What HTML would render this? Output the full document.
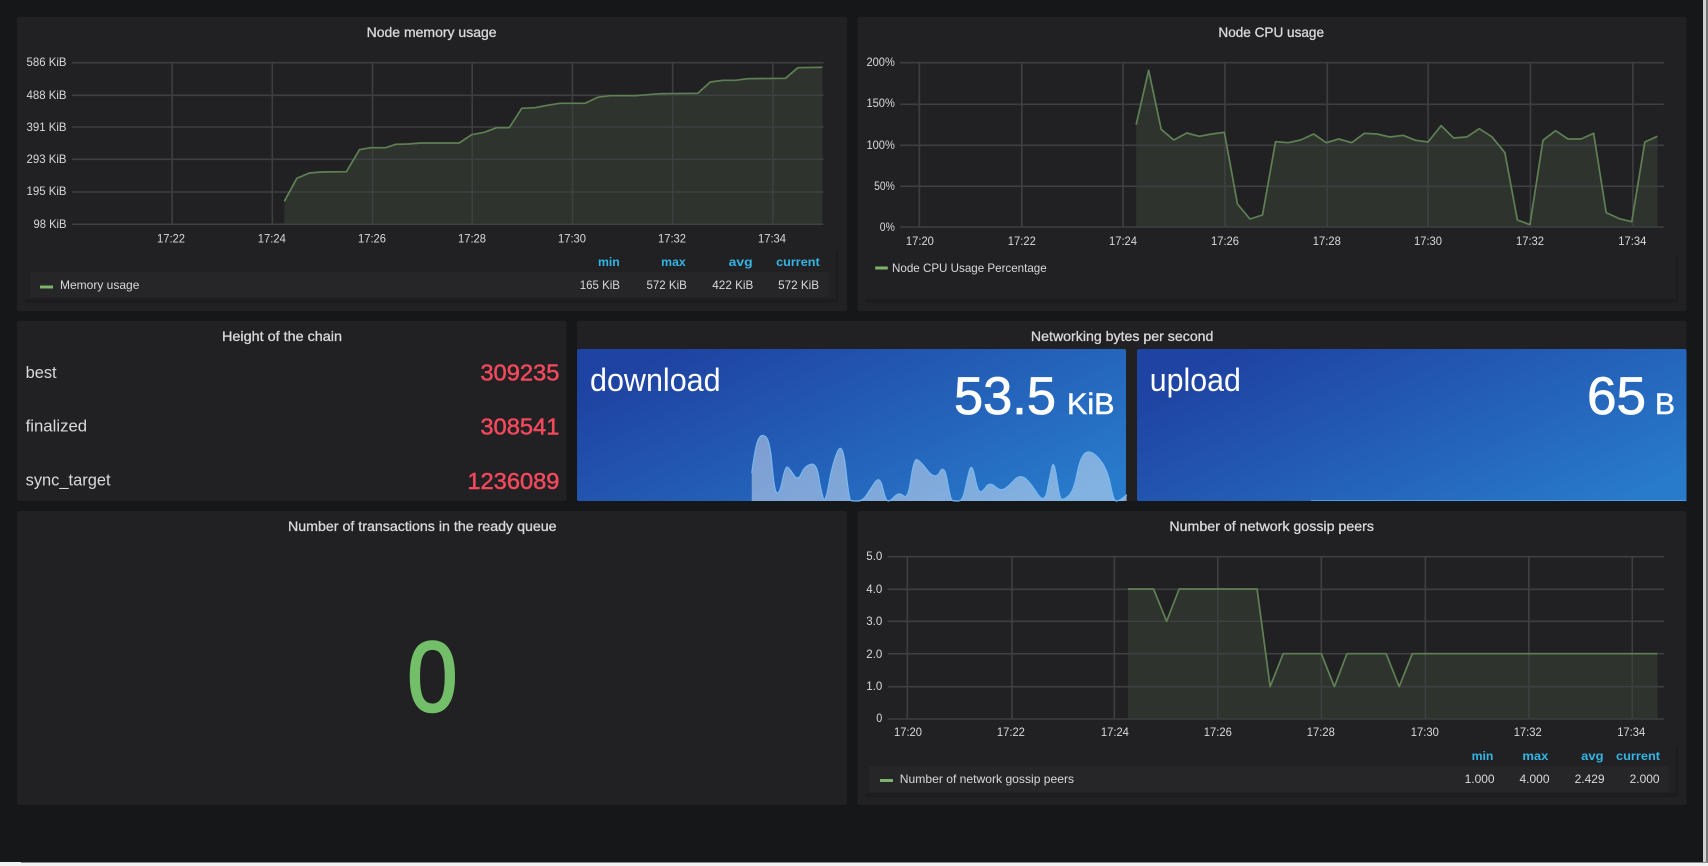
<!DOCTYPE html>
<html>
<head>
<meta charset="utf-8">
<style>
html,body{margin:0;padding:0;background:#161719;width:1708px;height:866px;overflow:hidden}
svg{display:block;font-family:"Liberation Sans",sans-serif}
text{white-space:pre}
.t{font-size:14px;fill:#d8d9da;text-anchor:middle;stroke:#d8d9da;stroke-width:.3px}
.k{font-size:12px;fill:#d8d9da;text-anchor:middle}
.y{font-size:12px;fill:#d8d9da;text-anchor:end}
.h{font-size:12px;fill:#33b5e5;text-anchor:end;font-weight:bold}
.v{font-size:12px;fill:#d8d9da;text-anchor:end}
.l{font-size:12px;fill:#d8d9da}
.n{font-size:17px;fill:#d8d9da}
.r{font-size:23px;fill:#f2495c;text-anchor:end;stroke:#f2495c;stroke-width:.5px}
.w{fill:#fff}
.g{stroke:#3d3f41;stroke-width:1.6;fill:none;vector-effect:non-scaling-stroke}
.s{stroke:#5f8055;stroke-width:1.7;fill:none;vector-effect:non-scaling-stroke;stroke-linejoin:round}
.a{fill:#2e332d;stroke:none}
</style>
</head>
<body>
<svg width="1708" height="866" viewBox="0 0 1708 866" xmlns="http://www.w3.org/2000/svg">
<defs>
<linearGradient id="bl" gradientUnits="objectBoundingBox" x1="0" y1="0.2" x2="1" y2="0.8">
<stop offset="0.05" stop-color="#1f43a2"/><stop offset="1" stop-color="#287acb"/>
</linearGradient>
</defs>
<rect width="1708" height="866" fill="#161719"/>

<!-- panels -->
<rect x="17" y="17" width="830" height="294" rx="2" fill="#212124"/>
<rect x="857.5" y="17" width="829" height="294" rx="2" fill="#212124"/>
<rect x="17" y="321" width="549.5" height="180" rx="2" fill="#212124"/>
<rect x="577" y="321" width="1109.5" height="180" rx="2" fill="#212124"/>
<rect x="17" y="511" width="830" height="294" rx="2" fill="#212124"/>
<rect x="857.5" y="511" width="829" height="294" rx="2" fill="#212124"/>

<!-- titles -->
<text class="t" x="431.6" y="37" textLength="130" lengthAdjust="spacingAndGlyphs">Node memory usage</text>
<text class="t" x="1271.2" y="37" textLength="105.6" lengthAdjust="spacingAndGlyphs">Node CPU usage</text>
<text class="t" x="282" y="341" textLength="120" lengthAdjust="spacingAndGlyphs">Height of the chain</text>
<text class="t" x="1122.2" y="341" textLength="182.5" lengthAdjust="spacingAndGlyphs">Networking bytes per second</text>
<text class="t" x="422.3" y="531" textLength="268.6" lengthAdjust="spacingAndGlyphs">Number of transactions in the ready queue</text>
<text class="t" x="1271.7" y="531" textLength="204.6" lengthAdjust="spacingAndGlyphs">Number of network gossip peers</text>

<!-- chart 1 -->
<g transform="scale(0.54466,0.33333)">
<polygon class="a" points="522,673 522,604 545,535 568,519 590,516 636,515 660,449 680,443 708,443 727,433 750,432 772,429 843,429 866,404 889,397 912,383 935,383 958,325 982,323 1005,316 1028,310 1074,310 1097,292 1120,287 1166,287 1212,281 1281,280 1304,246 1327,241 1350,241 1373,236 1442,235 1465,203 1510,202 1510,673"/>
<path class="g" d="M132 188H1512M132 286H1512M132 381H1512M132 478H1512M132 576H1512M132 673H1512M316 188V673M500 188V673M684 188V673M867 188V673M1051 188V673M1235 188V673M1419 188V673"/>
<polyline class="s" points="522,604 545,535 568,519 590,516 636,515 660,449 680,443 708,443 727,433 750,432 772,429 843,429 866,404 889,397 912,383 935,383 958,325 982,323 1005,316 1028,310 1074,310 1097,292 1120,287 1166,287 1212,281 1281,280 1304,246 1327,241 1350,241 1373,236 1442,235 1465,203 1510,202"/>
</g>
<g>
<text class="y" x="66.5" y="66" textLength="40" lengthAdjust="spacingAndGlyphs">586 KiB</text>
<text class="y" x="66.5" y="99" textLength="40" lengthAdjust="spacingAndGlyphs">488 KiB</text>
<text class="y" x="66.5" y="131" textLength="40" lengthAdjust="spacingAndGlyphs">391 KiB</text>
<text class="y" x="66.5" y="163" textLength="40" lengthAdjust="spacingAndGlyphs">293 KiB</text>
<text class="y" x="66.5" y="195" textLength="40" lengthAdjust="spacingAndGlyphs">195 KiB</text>
<text class="y" x="66.5" y="228" textLength="33" lengthAdjust="spacingAndGlyphs">98 KiB</text>
<text class="k" x="171" y="242.5" textLength="28" lengthAdjust="spacingAndGlyphs">17:22</text>
<text class="k" x="271.8" y="242.5" textLength="28" lengthAdjust="spacingAndGlyphs">17:24</text>
<text class="k" x="372" y="242.5" textLength="28" lengthAdjust="spacingAndGlyphs">17:26</text>
<text class="k" x="472" y="242.5" textLength="28" lengthAdjust="spacingAndGlyphs">17:28</text>
<text class="k" x="572" y="242.5" textLength="28" lengthAdjust="spacingAndGlyphs">17:30</text>
<text class="k" x="672" y="242.5" textLength="28" lengthAdjust="spacingAndGlyphs">17:32</text>
<text class="k" x="772" y="242.5" textLength="28" lengthAdjust="spacingAndGlyphs">17:34</text>
</g>
<!-- legend 1 -->
<rect x="836" y="252" width="2" height="50" fill="#1c1c1f"/>
<rect x="25" y="299" width="811" height="4" fill="#1c1c1f"/>
<rect x="30" y="272" width="799" height="25" fill="#262628"/>
<text class="h" x="619.8" y="266" textLength="21.8" lengthAdjust="spacingAndGlyphs">min</text>
<text class="h" x="685.7" y="266" textLength="24.5" lengthAdjust="spacingAndGlyphs">max</text>
<text class="h" x="752.7" y="266" textLength="24" lengthAdjust="spacingAndGlyphs">avg</text>
<text class="h" x="819.7" y="266" textLength="43.6" lengthAdjust="spacingAndGlyphs">current</text>
<rect x="40" y="285.5" width="13" height="3" fill="#7eb26d"/>
<text class="l" x="60" y="289" textLength="79.4" lengthAdjust="spacingAndGlyphs">Memory usage</text>
<text class="v" x="620" y="289" textLength="40.3" lengthAdjust="spacingAndGlyphs">165 KiB</text>
<text class="v" x="686.8" y="289" textLength="40.3" lengthAdjust="spacingAndGlyphs">572 KiB</text>
<text class="v" x="753.3" y="289" textLength="41" lengthAdjust="spacingAndGlyphs">422 KiB</text>
<text class="v" x="819.1" y="289" textLength="41" lengthAdjust="spacingAndGlyphs">572 KiB</text>

<!-- chart 2 -->
<g transform="translate(854,0) scale(0.54466,0.33333)">
<polygon class="a" points="518,681 518,374 541,211 564,388 587,420 611,399 634,409 657,402 680,397 704,612 727,657 750,645 774,425 797,428 820,420 844,402 867,428 890,417 914,428 937,400 960,402 984,411 1008,406 1031,421 1054,426 1078,377 1101,414 1125,411 1148,386 1171,410 1195,458 1218,660 1241,674 1265,421 1288,392 1311,417 1335,417 1358,400 1381,638 1405,656 1428,665 1452,426 1475,409 1475,681"/>
<path class="g" d="M85 188H1487M85 313H1487M85 436H1487M85 559H1487M85 681H1487M120 188V681M308 188V681M494 188V681M681 188V681M869 188V681M1054 188V681M1242 188V681M1430 188V681"/>
<polyline class="s" points="518,374 541,211 564,388 587,420 611,399 634,409 657,402 680,397 704,612 727,657 750,645 774,425 797,428 820,420 844,402 867,428 890,417 914,428 937,400 960,402 984,411 1008,406 1031,421 1054,426 1078,377 1101,414 1125,411 1148,386 1171,410 1195,458 1218,660 1241,674 1265,421 1288,392 1311,417 1335,417 1358,400 1381,638 1405,656 1428,665 1452,426 1475,409"/>
</g>
<text class="y" x="894.8" y="66" textLength="28.3" lengthAdjust="spacingAndGlyphs">200%</text>
<text class="y" x="894.8" y="107" textLength="28.3" lengthAdjust="spacingAndGlyphs">150%</text>
<text class="y" x="894.8" y="149" textLength="28.3" lengthAdjust="spacingAndGlyphs">100%</text>
<text class="y" x="894.8" y="190" textLength="20.7" lengthAdjust="spacingAndGlyphs">50%</text>
<text class="y" x="894.8" y="231" textLength="15" lengthAdjust="spacingAndGlyphs">0%</text>
<text class="k" x="919.9" y="245" textLength="28" lengthAdjust="spacingAndGlyphs">17:20</text>
<text class="k" x="1021.8" y="245" textLength="28" lengthAdjust="spacingAndGlyphs">17:22</text>
<text class="k" x="1123" y="245" textLength="28" lengthAdjust="spacingAndGlyphs">17:24</text>
<text class="k" x="1225" y="245" textLength="28" lengthAdjust="spacingAndGlyphs">17:26</text>
<text class="k" x="1326.8" y="245" textLength="28" lengthAdjust="spacingAndGlyphs">17:28</text>
<text class="k" x="1428" y="245" textLength="28" lengthAdjust="spacingAndGlyphs">17:30</text>
<text class="k" x="1530" y="245" textLength="28" lengthAdjust="spacingAndGlyphs">17:32</text>
<text class="k" x="1632.3" y="245" textLength="28" lengthAdjust="spacingAndGlyphs">17:34</text>
<rect x="1676" y="256" width="2" height="46" fill="#1c1c1f"/>
<rect x="865" y="299" width="811" height="4" fill="#1c1c1f"/>
<rect x="875.2" y="266.5" width="12.6" height="3" fill="#7eb26d"/>
<text class="l" x="892" y="272" textLength="154.7" lengthAdjust="spacingAndGlyphs">Node CPU Usage Percentage</text>

<!-- height of the chain -->
<text class="n" x="25.6" y="378" textLength="31" lengthAdjust="spacingAndGlyphs">best</text>
<text class="n" x="25.6" y="431.7" textLength="61.5" lengthAdjust="spacingAndGlyphs">finalized</text>
<text class="n" x="25.6" y="485.7" textLength="85" lengthAdjust="spacingAndGlyphs">sync_target</text>
<text class="r" x="559.4" y="380.7" textLength="79" lengthAdjust="spacingAndGlyphs">309235</text>
<text class="r" x="559.4" y="434.7" textLength="79" lengthAdjust="spacingAndGlyphs">308541</text>
<text class="r" x="559.4" y="489" textLength="92" lengthAdjust="spacingAndGlyphs">1236089</text>

<!-- networking -->
<rect x="577" y="349" width="549" height="152" rx="2" fill="url(#bl)"/>
<rect x="1137" y="349" width="549.5" height="152" rx="2" fill="url(#bl)"/>
<g transform="translate(570,420) scale(0.36350,0.33333)">
<path fill="#fff" fill-opacity=".42" d="M500 160 Q510 75 518.5 57.5 Q527 40 538.5 50 Q550 60 556 136 Q562 212 569 218.5 Q576 225 584 182.5 Q592 140 597 141 Q602 142 614.5 163.5 Q627 185 636 161.5 Q645 138 661.5 133 Q678 128 684 169 Q690 210 696 232.5 Q702 255 712 192.5 Q722 130 736 95 Q750 60 759 150 Q768 240 773 241.5 Q778 243 791.5 243 Q805 243 815 226.5 Q825 210 838.5 187.5 Q852 165 860 202.5 Q868 240 874 242.5 Q880 245 892.5 230 Q905 215 917.5 227.5 Q930 240 937.5 180 Q945 120 952.5 119 Q960 118 982.5 150 Q1005 182 1017.5 156 Q1030 130 1038.5 185 Q1047 240 1052.5 241.5 Q1058 243 1069 243 Q1080 243 1086 211.5 Q1092 180 1098.5 152.5 Q1105 125 1113.5 170 Q1122 215 1128.5 215 Q1135 215 1145 200 Q1155 185 1170 200 Q1185 215 1197.5 205 Q1210 195 1222.5 180 Q1235 165 1248.5 172.5 Q1262 180 1283.5 217.5 Q1305 255 1312.5 212.5 Q1320 170 1325.5 142.5 Q1331 115 1339 175 Q1347 235 1352.5 237.5 Q1358 240 1371.5 227.5 Q1385 215 1395 160 Q1405 105 1420 97.5 Q1435 90 1456.5 117.5 Q1478 145 1486.5 192.5 Q1495 240 1501 242.5 Q1507 245 1519.5 234.5 L1532 224 V243 H500 Z"/>
<path fill="none" stroke="#79b8ee" stroke-width="1.2" style="vector-effect:non-scaling-stroke" d="M500 160 Q510 75 518.5 57.5 Q527 40 538.5 50 Q550 60 556 136 Q562 212 569 218.5 Q576 225 584 182.5 Q592 140 597 141 Q602 142 614.5 163.5 Q627 185 636 161.5 Q645 138 661.5 133 Q678 128 684 169 Q690 210 696 232.5 Q702 255 712 192.5 Q722 130 736 95 Q750 60 759 150 Q768 240 773 241.5 Q778 243 791.5 243 Q805 243 815 226.5 Q825 210 838.5 187.5 Q852 165 860 202.5 Q868 240 874 242.5 Q880 245 892.5 230 Q905 215 917.5 227.5 Q930 240 937.5 180 Q945 120 952.5 119 Q960 118 982.5 150 Q1005 182 1017.5 156 Q1030 130 1038.5 185 Q1047 240 1052.5 241.5 Q1058 243 1069 243 Q1080 243 1086 211.5 Q1092 180 1098.5 152.5 Q1105 125 1113.5 170 Q1122 215 1128.5 215 Q1135 215 1145 200 Q1155 185 1170 200 Q1185 215 1197.5 205 Q1210 195 1222.5 180 Q1235 165 1248.5 172.5 Q1262 180 1283.5 217.5 Q1305 255 1312.5 212.5 Q1320 170 1325.5 142.5 Q1331 115 1339 175 Q1347 235 1352.5 237.5 Q1358 240 1371.5 227.5 Q1385 215 1395 160 Q1405 105 1420 97.5 Q1435 90 1456.5 117.5 Q1478 145 1486.5 192.5 Q1495 240 1501 242.5 Q1507 245 1519.5 234.5 L1532 224"/>
</g>
<rect x="1311" y="500" width="375.5" height="1" fill="#4a9be8"/>
<text class="w" x="590" y="391" font-size="32" textLength="130.6" lengthAdjust="spacingAndGlyphs">download</text>
<text class="w" x="1149.8" y="391" font-size="32" textLength="91" lengthAdjust="spacingAndGlyphs">upload</text>
<text class="w" x="954" y="414" font-size="53" textLength="102" lengthAdjust="spacingAndGlyphs" stroke="#fff" stroke-width=".8">53.5</text>
<text class="w" x="1067" y="414" font-size="30" textLength="47.5" lengthAdjust="spacingAndGlyphs" stroke="#fff" stroke-width=".5">KiB</text>
<text class="w" x="1587" y="414" font-size="53" textLength="59" lengthAdjust="spacingAndGlyphs" stroke="#fff" stroke-width=".8">65</text>
<text class="w" x="1655" y="414" font-size="30" textLength="20" lengthAdjust="spacingAndGlyphs" stroke="#fff" stroke-width=".5">B</text>

<!-- big zero -->
<text x="432.4" y="711" font-size="99" text-anchor="middle" fill="#73bf69" stroke="#73bf69" stroke-width="2.5" textLength="50" lengthAdjust="spacingAndGlyphs">0</text>

<!-- chart 6 -->
<g transform="translate(854,510) scale(0.54466,0.33333)">
<polygon class="a" points="503,627 503,237 550,237 574,334 597,237 740,237 764,530 788,431 858,431 882,530 905,431 977,431 1001,530 1025,431 1475,431 1475,627"/>
<path class="g" d="M62 140H1487M62 238H1487M62 334H1487M62 431H1487M62 530H1487M62 627H1487M98 140V627M290 140V627M478 140V627M668 140V627M858 140V627M1049 140V627M1239 140V627M1429 140V627"/>
<polyline class="s" points="503,237 550,237 574,334 597,237 740,237 764,530 788,431 858,431 882,530 905,431 977,431 1001,530 1025,431 1475,431"/>
</g>
<text class="y" x="882.3" y="560" textLength="16" lengthAdjust="spacingAndGlyphs">5.0</text>
<text class="y" x="882.3" y="593" textLength="16" lengthAdjust="spacingAndGlyphs">4.0</text>
<text class="y" x="882.3" y="625" textLength="16" lengthAdjust="spacingAndGlyphs">3.0</text>
<text class="y" x="882.3" y="658" textLength="16" lengthAdjust="spacingAndGlyphs">2.0</text>
<text class="y" x="882.3" y="690" textLength="16" lengthAdjust="spacingAndGlyphs">1.0</text>
<text class="y" x="882.3" y="722" textLength="6" lengthAdjust="spacingAndGlyphs">0</text>
<text class="k" x="908" y="736" textLength="28" lengthAdjust="spacingAndGlyphs">17:20</text>
<text class="k" x="1010.9" y="736" textLength="28" lengthAdjust="spacingAndGlyphs">17:22</text>
<text class="k" x="1114.9" y="736" textLength="28" lengthAdjust="spacingAndGlyphs">17:24</text>
<text class="k" x="1217.8" y="736" textLength="28" lengthAdjust="spacingAndGlyphs">17:26</text>
<text class="k" x="1320.8" y="736" textLength="28" lengthAdjust="spacingAndGlyphs">17:28</text>
<text class="k" x="1424.8" y="736" textLength="28" lengthAdjust="spacingAndGlyphs">17:30</text>
<text class="k" x="1527.7" y="736" textLength="28" lengthAdjust="spacingAndGlyphs">17:32</text>
<text class="k" x="1631.2" y="736" textLength="28" lengthAdjust="spacingAndGlyphs">17:34</text>
<rect x="1676" y="747" width="2" height="50" fill="#1c1c1f"/>
<rect x="865" y="793" width="811" height="4" fill="#1c1c1f"/>
<rect x="869.3" y="766" width="800" height="26.3" fill="#262628"/>
<text class="h" x="1493.4" y="760" textLength="21.8" lengthAdjust="spacingAndGlyphs">min</text>
<text class="h" x="1548.4" y="760" textLength="26" lengthAdjust="spacingAndGlyphs">max</text>
<text class="h" x="1603.5" y="760" textLength="22.3" lengthAdjust="spacingAndGlyphs">avg</text>
<text class="h" x="1660" y="760" textLength="44" lengthAdjust="spacingAndGlyphs">current</text>
<rect x="880" y="779" width="13" height="3" fill="#7eb26d"/>
<text class="l" x="899.8" y="783" textLength="174.3" lengthAdjust="spacingAndGlyphs">Number of network gossip peers</text>
<text class="v" x="1494.6" y="783" textLength="30" lengthAdjust="spacingAndGlyphs">1.000</text>
<text class="v" x="1549.5" y="783" textLength="30" lengthAdjust="spacingAndGlyphs">4.000</text>
<text class="v" x="1604.6" y="783" textLength="30" lengthAdjust="spacingAndGlyphs">2.429</text>
<text class="v" x="1659.6" y="783" textLength="30" lengthAdjust="spacingAndGlyphs">2.000</text>

<!-- window edges -->
<rect x="1703" y="0" width="3" height="866" fill="#cfcfcf"/>
<rect x="1706" y="0" width="2" height="866" fill="#777"/>
<rect x="0" y="863" width="1708" height="3" fill="#f2f2f2"/>
<rect x="21" y="862" width="1687" height="1" fill="#8a8a8a"/>
<rect x="0" y="862" width="21" height="1" fill="#f2f2f2"/>
</svg>
</body>
</html>
